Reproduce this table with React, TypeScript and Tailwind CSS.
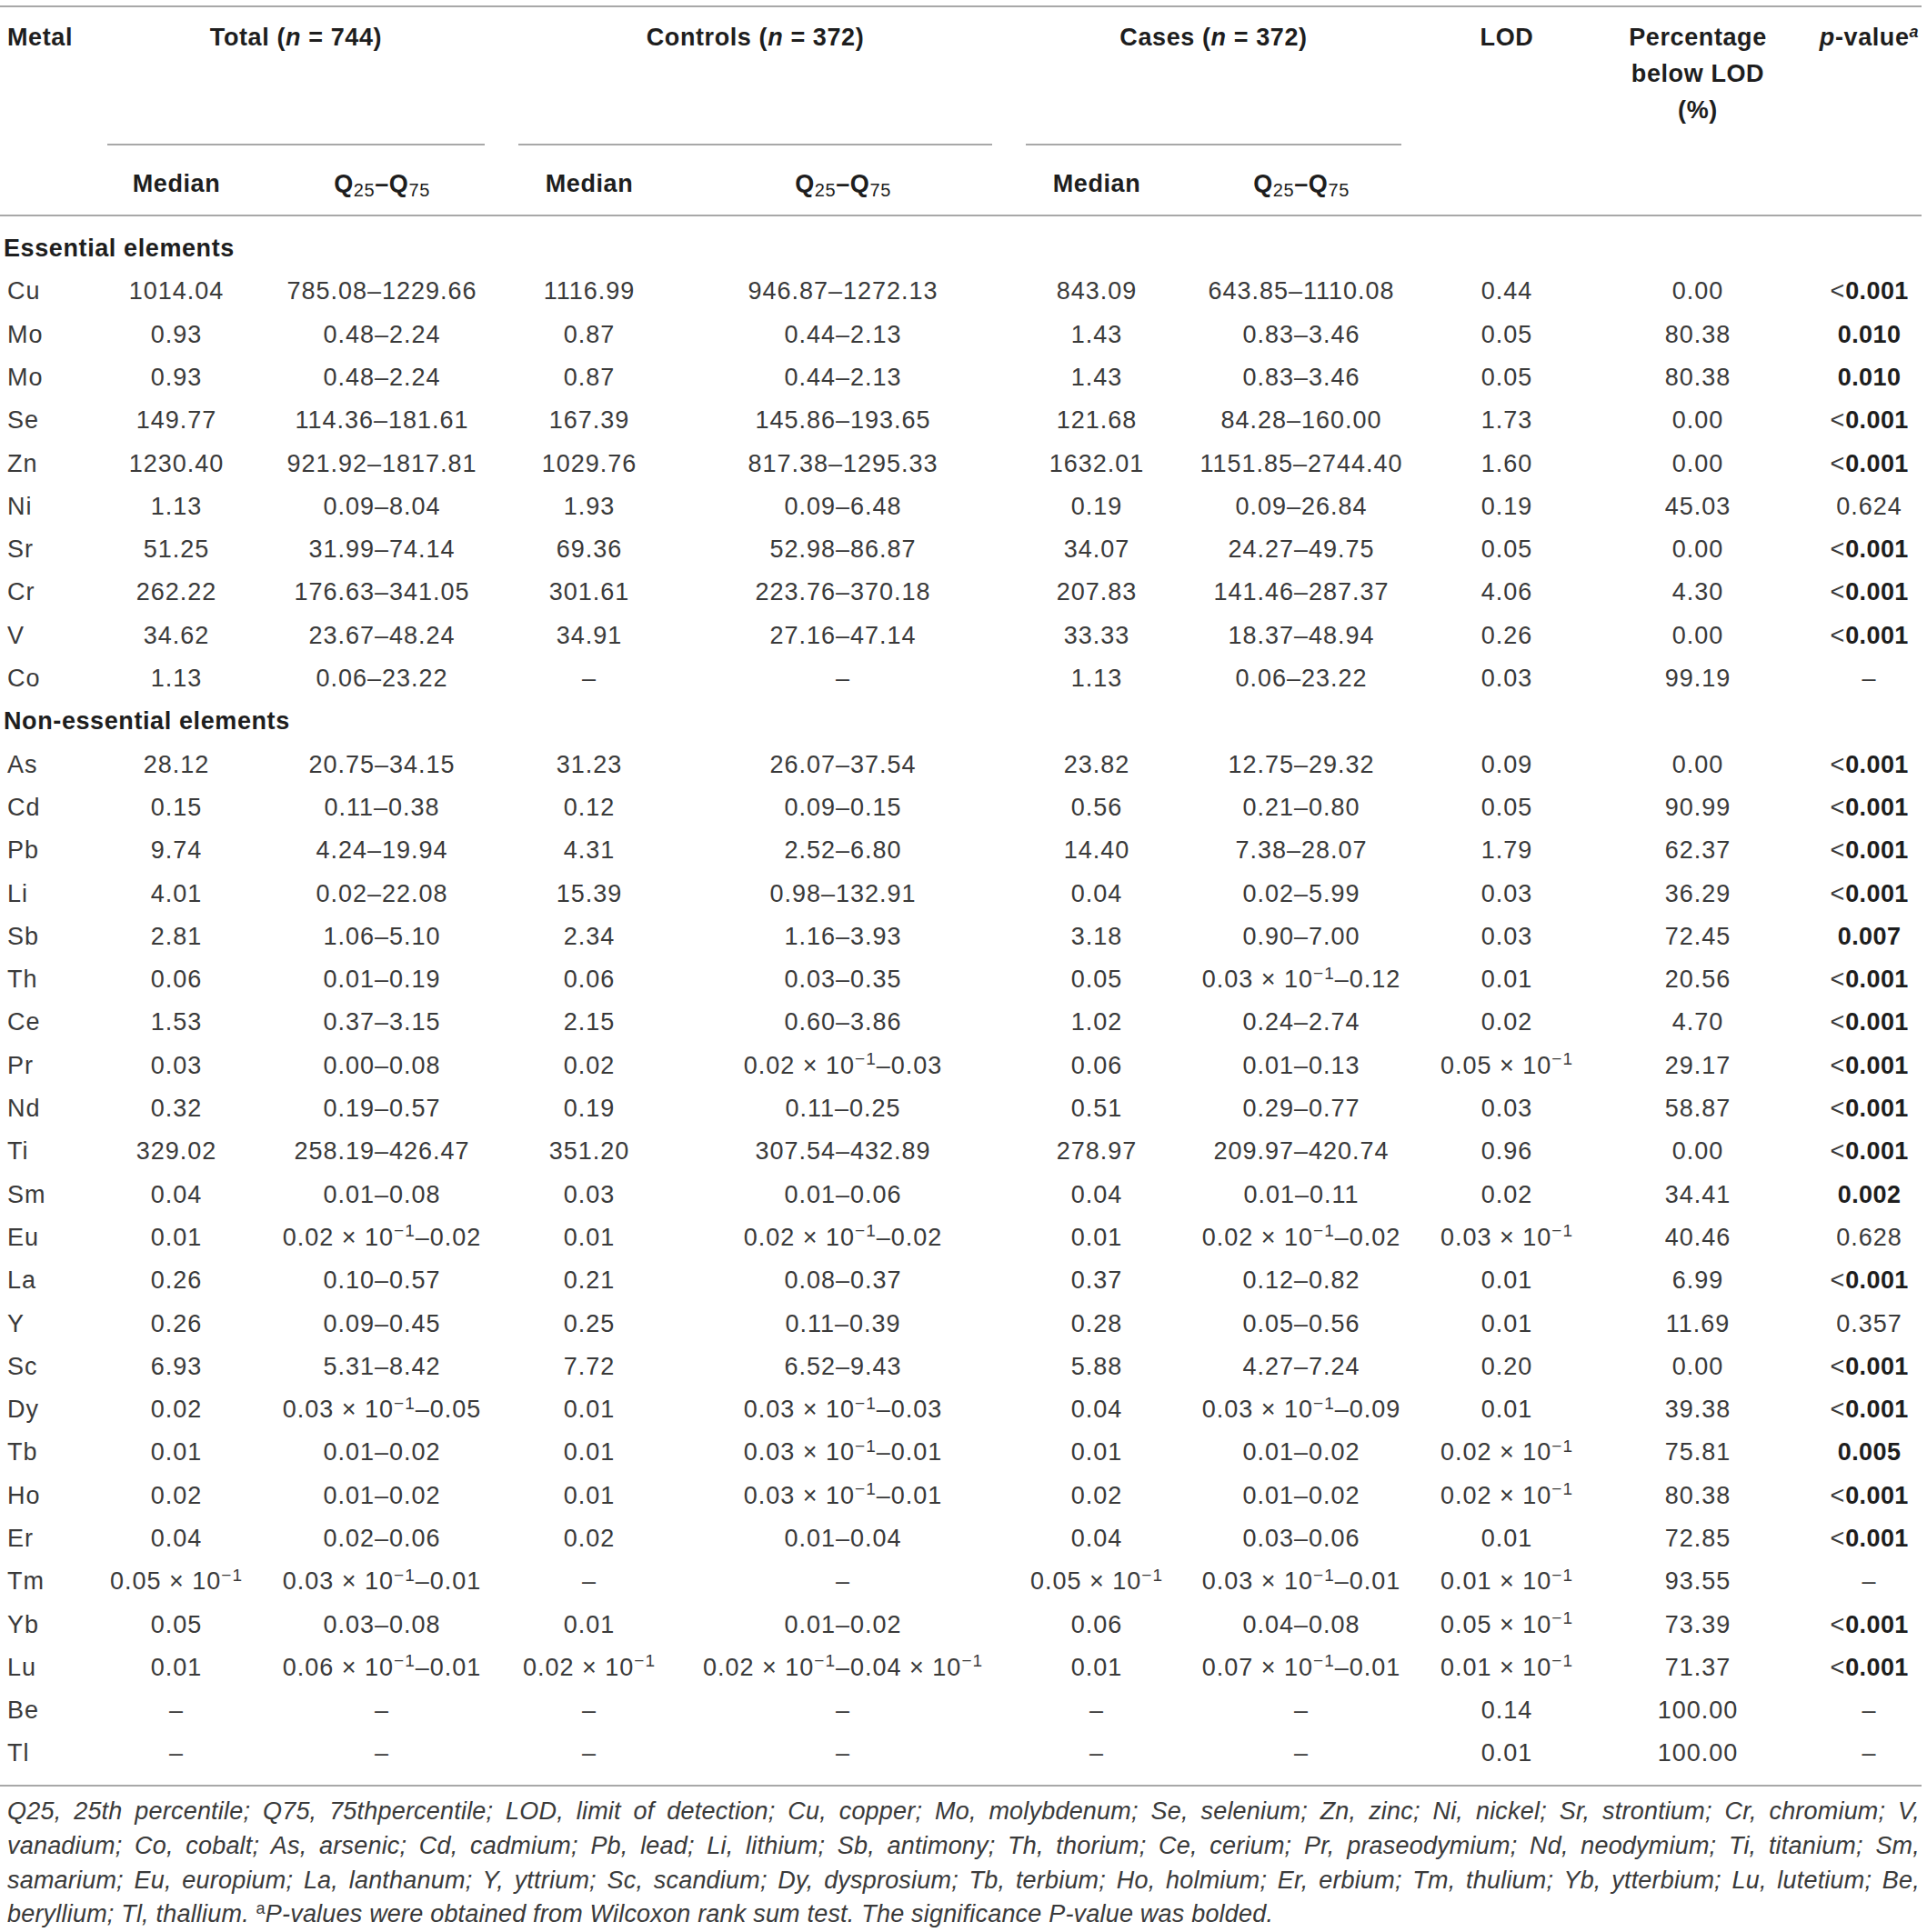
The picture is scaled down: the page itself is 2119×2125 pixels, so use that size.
import React from 'react';

// E marks " × 10^-1"
type Row = [string, string, string, string, string, string, string, string, string, string];

const essential: Row[] = [
  ['Cu', '1014.04', '785.08–1229.66', '1116.99', '946.87–1272.13', '843.09', '643.85–1110.08', '0.44', '0.00', '<0.001'],
  ['Mo', '0.93', '0.48–2.24', '0.87', '0.44–2.13', '1.43', '0.83–3.46', '0.05', '80.38', '0.010'],
  ['Mo', '0.93', '0.48–2.24', '0.87', '0.44–2.13', '1.43', '0.83–3.46', '0.05', '80.38', '0.010'],
  ['Se', '149.77', '114.36–181.61', '167.39', '145.86–193.65', '121.68', '84.28–160.00', '1.73', '0.00', '<0.001'],
  ['Zn', '1230.40', '921.92–1817.81', '1029.76', '817.38–1295.33', '1632.01', '1151.85–2744.40', '1.60', '0.00', '<0.001'],
  ['Ni', '1.13', '0.09–8.04', '1.93', '0.09–6.48', '0.19', '0.09–26.84', '0.19', '45.03', '0.624'],
  ['Sr', '51.25', '31.99–74.14', '69.36', '52.98–86.87', '34.07', '24.27–49.75', '0.05', '0.00', '<0.001'],
  ['Cr', '262.22', '176.63–341.05', '301.61', '223.76–370.18', '207.83', '141.46–287.37', '4.06', '4.30', '<0.001'],
  ['V', '34.62', '23.67–48.24', '34.91', '27.16–47.14', '33.33', '18.37–48.94', '0.26', '0.00', '<0.001'],
  ['Co', '1.13', '0.06–23.22', '–', '–', '1.13', '0.06–23.22', '0.03', '99.19', '–'],
];

const nonEssential: Row[] = [
  ['As', '28.12', '20.75–34.15', '31.23', '26.07–37.54', '23.82', '12.75–29.32', '0.09', '0.00', '<0.001'],
  ['Cd', '0.15', '0.11–0.38', '0.12', '0.09–0.15', '0.56', '0.21–0.80', '0.05', '90.99', '<0.001'],
  ['Pb', '9.74', '4.24–19.94', '4.31', '2.52–6.80', '14.40', '7.38–28.07', '1.79', '62.37', '<0.001'],
  ['Li', '4.01', '0.02–22.08', '15.39', '0.98–132.91', '0.04', '0.02–5.99', '0.03', '36.29', '<0.001'],
  ['Sb', '2.81', '1.06–5.10', '2.34', '1.16–3.93', '3.18', '0.90–7.00', '0.03', '72.45', '0.007'],
  ['Th', '0.06', '0.01–0.19', '0.06', '0.03–0.35', '0.05', '0.03E–0.12', '0.01', '20.56', '<0.001'],
  ['Ce', '1.53', '0.37–3.15', '2.15', '0.60–3.86', '1.02', '0.24–2.74', '0.02', '4.70', '<0.001'],
  ['Pr', '0.03', '0.00–0.08', '0.02', '0.02E–0.03', '0.06', '0.01–0.13', '0.05E', '29.17', '<0.001'],
  ['Nd', '0.32', '0.19–0.57', '0.19', '0.11–0.25', '0.51', '0.29–0.77', '0.03', '58.87', '<0.001'],
  ['Ti', '329.02', '258.19–426.47', '351.20', '307.54–432.89', '278.97', '209.97–420.74', '0.96', '0.00', '<0.001'],
  ['Sm', '0.04', '0.01–0.08', '0.03', '0.01–0.06', '0.04', '0.01–0.11', '0.02', '34.41', '0.002'],
  ['Eu', '0.01', '0.02E–0.02', '0.01', '0.02E–0.02', '0.01', '0.02E–0.02', '0.03E', '40.46', '0.628'],
  ['La', '0.26', '0.10–0.57', '0.21', '0.08–0.37', '0.37', '0.12–0.82', '0.01', '6.99', '<0.001'],
  ['Y', '0.26', '0.09–0.45', '0.25', '0.11–0.39', '0.28', '0.05–0.56', '0.01', '11.69', '0.357'],
  ['Sc', '6.93', '5.31–8.42', '7.72', '6.52–9.43', '5.88', '4.27–7.24', '0.20', '0.00', '<0.001'],
  ['Dy', '0.02', '0.03E–0.05', '0.01', '0.03E–0.03', '0.04', '0.03E–0.09', '0.01', '39.38', '<0.001'],
  ['Tb', '0.01', '0.01–0.02', '0.01', '0.03E–0.01', '0.01', '0.01–0.02', '0.02E', '75.81', '0.005'],
  ['Ho', '0.02', '0.01–0.02', '0.01', '0.03E–0.01', '0.02', '0.01–0.02', '0.02E', '80.38', '<0.001'],
  ['Er', '0.04', '0.02–0.06', '0.02', '0.01–0.04', '0.04', '0.03–0.06', '0.01', '72.85', '<0.001'],
  ['Tm', '0.05E', '0.03E–0.01', '–', '–', '0.05E', '0.03E–0.01', '0.01E', '93.55', '–'],
  ['Yb', '0.05', '0.03–0.08', '0.01', '0.01–0.02', '0.06', '0.04–0.08', '0.05E', '73.39', '<0.001'],
  ['Lu', '0.01', '0.06E–0.01', '0.02E', '0.02E–0.04E', '0.01', '0.07E–0.01', '0.01E', '71.37', '<0.001'],
  ['Be', '–', '–', '–', '–', '–', '–', '0.14', '100.00', '–'],
  ['Tl', '–', '–', '–', '–', '–', '–', '0.01', '100.00', '–'],
];

const fmt = (s: string) => {
  const parts = s.split('E');
  return parts.map((p, i) => (
    <React.Fragment key={i}>
      {p}
      {i < parts.length - 1 && (
        <>
          {' × 10'}
          <sup className="text-[19px]">−1</sup>
        </>
      )}
    </React.Fragment>
  ));
};

const PValue = ({ v }: { v: string }) => {
  const bold = v.startsWith('<') || (v !== '–' && parseFloat(v) < 0.05);
  if (!bold) return <>{v}</>;
  if (v.startsWith('<'))
    return (
      <>
        {'<'}
        <span className="font-bold text-[#1e1e1e] tracking-[0.4px]">{v.slice(1)}</span>
      </>
    );
  return <span className="font-bold text-[#1e1e1e] tracking-[0.4px]">{v}</span>;
};

const Cols = () => (
  <colgroup>
    <col className="w-[118px]" />
    <col className="w-[152px]" />
    <col className="w-[300px]" />
    <col className="w-[156px]" />
    <col className="w-[402px]" />
    <col className="w-[156px]" />
    <col className="w-[294px]" />
    <col className="w-[158px]" />
    <col className="w-[262px]" />
    <col className="w-[115px]" />
  </colgroup>
);

const Q = () => (
  <>
    Q<sub className="text-[20px] font-normal">25</sub>–Q<sub className="text-[20px] font-normal">75</sub>
  </>
);

const DataRow = ({ r }: { r: Row }) => (
  <tr className="h-[47.3px]">
    <td className="p-0 pl-[8px] text-left">{r[0]}</td>
    {r.slice(1, 9).map((c, i) => (
      <td key={i} className="p-0 text-center whitespace-nowrap">
        {fmt(c)}
      </td>
    ))}
    <td className="p-0 text-center whitespace-nowrap">
      <PValue v={r[9]} />
    </td>
  </tr>
);

const Line = () => <div className="h-[2px] w-[2113px] bg-[#a8a8a8]" />;

export default function App() {
  return (
    <div className="w-[2119px] h-[2125px] bg-white text-[#3a3a3a] font-['Liberation_Sans',Arial,sans-serif] text-[27px] tracking-[1px] overflow-hidden">
      <div className="h-[6px]" />
      <Line />
      <table className="table-fixed border-collapse w-[2113px] font-bold text-[#1e1e1e] tracking-[0.6px]">
        <Cols />
        <thead>
          <tr>
            <th rowSpan={2} className="p-0 pl-[8px] pt-[13px] align-top text-left leading-[40px]">
              Metal
            </th>
            {['Total (', 'Controls (', 'Cases ('].map((t, i) => (
              <th key={i} colSpan={2} className="p-0 align-top">
                <div className="mr-[37px] h-[152px] pt-[13px] leading-[40px] border-b-2 border-[#a8a8a8] text-center">
                  {t}
                  <i>n</i> = {i === 0 ? '744' : '372'})
                </div>
              </th>
            ))}
            <th rowSpan={2} className="p-0 pt-[13px] align-top text-center leading-[40px]">
              LOD
            </th>
            <th rowSpan={2} className="p-0 pt-[13px] align-top text-center leading-[40px]">
              Percentage
              <br />
              below LOD
              <br />
              (%)
            </th>
            <th rowSpan={2} className="p-0 pt-[13px] align-top text-center leading-[40px]">
              <i>p</i>-value<sup className="text-[18px]"><i>a</i></sup>
            </th>
          </tr>
          <tr className="h-[76px]">
            {[0, 1, 2].map((i) => (
              <React.Fragment key={i}>
                <th className="p-0 pt-[8px] text-center leading-[40px]">Median</th>
                <th className="p-0 pt-[8px] text-center leading-[40px] whitespace-nowrap">
                  <Q />
                </th>
              </React.Fragment>
            ))}
          </tr>
        </thead>
      </table>
      <Line />
      <table className="table-fixed border-collapse w-[2113px]">
        <Cols />
        <tbody>
          <tr>
            <td colSpan={10} className="p-0 pl-[4px] pt-[12px] leading-[47px] font-bold text-[#1e1e1e] tracking-[0.6px]">
              Essential elements
            </td>
          </tr>
          {essential.map((r, i) => (
            <DataRow key={'e' + i} r={r} />
          ))}
          <tr className="h-[47.3px]">
            <td colSpan={10} className="p-0 pl-[4px] font-bold text-[#1e1e1e] tracking-[0.6px]">
              Non-essential elements
            </td>
          </tr>
          {nonEssential.map((r, i) => (
            <DataRow key={'n' + i} r={r} />
          ))}
        </tbody>
      </table>
      <div className="h-[11px]" />
      <Line />
      <div className="w-[2111px] pl-[8px] pt-[9px] italic text-[27px] tracking-[0.2px] leading-[37.6px] text-[#3a3a3a]">
        <div className="text-justify [text-align-last:justify] whitespace-nowrap">
          Q25, 25th percentile; Q75, 75thpercentile; LOD, limit of detection; Cu, copper; Mo, molybdenum; Se, selenium; Zn, zinc; Ni, nickel; Sr, strontium; Cr, chromium; V,
        </div>
        <div className="text-justify [text-align-last:justify] whitespace-nowrap">
          vanadium; Co, cobalt; As, arsenic; Cd, cadmium; Pb, lead; Li, lithium; Sb, antimony; Th, thorium; Ce, cerium; Pr, praseodymium; Nd, neodymium; Ti, titanium; Sm,
        </div>
        <div className="text-justify [text-align-last:justify] whitespace-nowrap">
          samarium; Eu, europium; La, lanthanum; Y, yttrium; Sc, scandium; Dy, dysprosium; Tb, terbium; Ho, holmium; Er, erbium; Tm, thulium; Yb, ytterbium; Lu, lutetium; Be,
        </div>
        <div className="whitespace-nowrap">
          beryllium; Tl, thallium. <sup className="not-italic text-[18px]">a</sup>P-values were obtained from Wilcoxon rank sum test. The significance P-value was bolded.
        </div>
      </div>
    </div>
  );
}
